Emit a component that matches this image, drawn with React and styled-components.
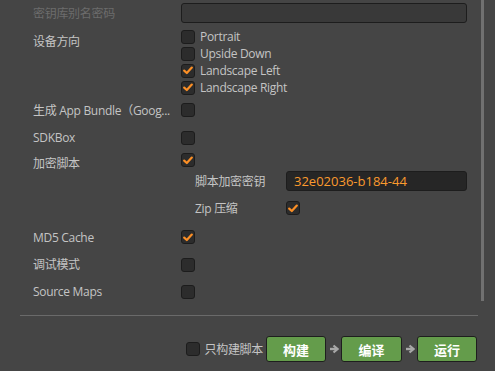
import React from 'react';
import styled, {createGlobalStyle} from 'styled-components';

const GlobalStyle = createGlobalStyle`
  html, body {
    margin: 0;
    padding: 0;
    background: #454545;
  }
  body {
    font-family: "Open Sans", "Noto Sans CJK SC", sans-serif;
    font-size: 12px;
    letter-spacing: -0.3px;
    color: #c4c4c4;
  }
`;

const Page = styled.div`
  display: flex;
  width: 495px;
  height: 371px;
  overflow: hidden;
  background: #454545;
`;
const Content = styled.div`
  width: 478px;
  padding: 0 0 0 20px;
  box-sizing: border-box;
  display: flex;
  flex-direction: column;
`;
const ScrollTrack = styled.div`
  width: 14px;
  padding-left: 3px;
  box-sizing: border-box;
`;
const Thumb = styled.div`
  width: 3px;
  height: 301px;
  background: #717171;
`;
const Row = styled.div`
  display: flex;
  align-items: center;
  height: ${p => p.$h}px;
  margin-top: ${p => p.$mt || 0}px;
  padding-left: ${p => p.$indent || 13}px;
  padding-right: 11px;
`;
const Label = styled.div`
  width: ${p => p.$w || 148}px;
  flex-shrink: 0;
  color: ${p => (p.$disabled ? '#6c6c6c' : '#c4c4c4')};
  white-space: nowrap;
  box-sizing: border-box;
  align-self: ${p => (p.$top ? 'flex-start' : 'center')};
  padding-top: ${p => p.$pt || 0}px;
  line-height: 17px;
`;
const TextInput = styled.div`
  flex: 1;
  height: 20px;
  box-sizing: border-box;
  border: 1px solid #1d1d1d;
  border-radius: 3px;
  background: ${p => (p.$dark ? '#262626' : '#393939')};
  color: #fb9a2e;
  font-size: 13px;
  letter-spacing: 0;
  line-height: 18px;
  padding-left: 7px;
`;
const Options = styled.div`
  display: flex;
  flex-direction: column;
`;
const Option = styled.div`
  display: flex;
  align-items: center;
  height: 17px;
  gap: 5px;
`;
const Box = styled.div`
  width: 14px;
  height: 14px;
  box-sizing: border-box;
  border: 1px solid #1c1c1c;
  border-radius: 3px;
  background: #2c2c2c;
  display: flex;
  align-items: center;
  justify-content: center;
  flex-shrink: 0;
  align-self: ${p => (p.$top ? 'flex-start' : 'center')};
  margin-top: ${p => p.$mt || 0}px;
`;
const Divider = styled.div`
  height: 1px;
  background: #6a6a6a;
  margin-top: 10px;
`;
const Toolbar = styled.div`
  display: flex;
  align-items: center;
  justify-content: flex-end;
  margin-top: 20px;
  height: 26px;
  padding-right: 1px;
`;
const OnlyScript = styled.div`
  display: flex;
  align-items: center;
  gap: 4px;
  margin-right: 3px;
  color: #c4c4c4;
`;
const Button = styled.div`
  width: ${p => p.$w || 60}px;
  height: 26px;
  box-sizing: border-box;
  border: 1px solid #1e1e1e;
  border-radius: 3px;
  background: #649c4b;
  color: #fff;
  font-weight: bold;
  font-size: 13px;
  letter-spacing: 0;
  display: flex;
  align-items: center;
  justify-content: center;
`;
const ArrowWrap = styled.div`
  width: 15px;
  display: flex;
  align-items: center;
  justify-content: center;
`;

const Check = () => (
  <svg width="10" height="9" viewBox="0 0 10 9">
    <path d="M1.2 4.6 L3.8 7 L8.8 1.6" fill="none" stroke="#fb8f26" strokeWidth="2.2" strokeLinecap="round" strokeLinejoin="round" />
  </svg>
);

const CheckBox = ({checked, ...rest}) => <Box {...rest}>{checked && <Check />}</Box>;

const Arrow = () => (
  <ArrowWrap>
    <svg width="10" height="10" viewBox="0 0 10 10">
      <path d="M1 5 H7" stroke="#a8a8a8" strokeWidth="2.4" />
      <path d="M4.5 1.5 L8.5 5 L4.5 8.5" fill="none" stroke="#a8a8a8" strokeWidth="2.2" />
    </svg>
  </ArrowWrap>
);

const orientations = [
  {name: 'Portrait', checked: false},
  {name: 'Upside Down', checked: false},
  {name: 'Landscape Left', checked: true},
  {name: 'Landscape Right', checked: true},
];

export default function App() {
  return (
    <Page>
      <GlobalStyle />
      <Content>
        <Row $h={20} $mt={3}>
          <Label $disabled>密钥库别名密码</Label>
          <TextInput />
        </Row>
        <Row $h={68} $mt={5}>
          <Label $top $pt={5}>设备方向</Label>
          <Options>
            {orientations.map(o => (
              <Option key={o.name}>
                <CheckBox checked={o.checked} />
                {o.name}
              </Option>
            ))}
          </Options>
        </Row>
        <Row $h={28}>
          <Label>生成 App Bundle（Goog...</Label>
          <CheckBox />
        </Row>
        <Row $h={27}>
          <Label>SDKBox</Label>
          <CheckBox />
        </Row>
        <Row $h={18}>
          <Label $top $pt={4}>加密脚本</Label>
          <CheckBox checked $top $mt={2} />
        </Row>
        <Row $h={24} $indent={175}>
          <Label $w={91}>脚本加密密钥</Label>
          <TextInput $dark>32e02036-b184-44</TextInput>
        </Row>
        <Row $h={30} $indent={175}>
          <Label $w={91}>Zip 压缩</Label>
          <CheckBox checked />
        </Row>
        <Row $h={28}>
          <Label>MD5 Cache</Label>
          <CheckBox checked />
        </Row>
        <Row $h={27}>
          <Label>调试模式</Label>
          <CheckBox />
        </Row>
        <Row $h={27}>
          <Label>Source Maps</Label>
          <CheckBox />
        </Row>
        <Divider />
        <Toolbar>
          <OnlyScript>
            <CheckBox />
            只构建脚本
          </OnlyScript>
          <Button>构建</Button>
          <Arrow />
          <Button $w={61}>编译</Button>
          <Arrow />
          <Button>运行</Button>
        </Toolbar>
      </Content>
      <ScrollTrack>
        <Thumb />
      </ScrollTrack>
    </Page>
  );
}
